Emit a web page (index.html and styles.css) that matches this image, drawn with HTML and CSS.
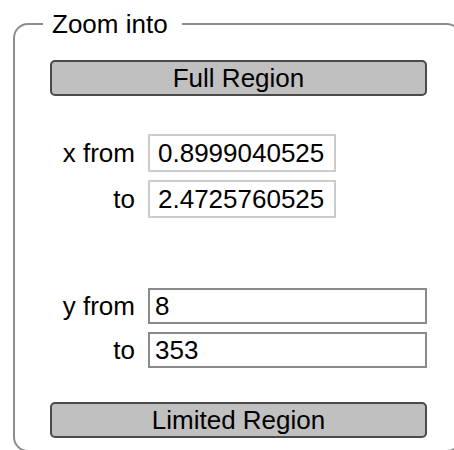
FILE: index.html
```html
<!DOCTYPE html>
<html lang="en">
<head>
<meta charset="utf-8">
<title>Zoom into</title>
<link rel="stylesheet" href="styles.css">
</head>
<body>
<fieldset class="zoom">
  <legend class="zoom-title">Zoom into</legend>
  <button type="button" class="region-btn">Full Region</button>
  <div class="range range-x">
    <label class="range-label" for="xfrom">x from</label>
    <input id="xfrom" class="range-input" type="text" value="0.8999040525">
    <label class="range-label" for="xto">to</label>
    <input id="xto" class="range-input" type="text" value="2.4725760525">
  </div>
  <div class="range range-y">
    <label class="range-label" for="yfrom">y from</label>
    <input id="yfrom" class="range-input" type="text" value="8">
    <label class="range-label" for="yto">to</label>
    <input id="yto" class="range-input" type="text" value="353">
  </div>
  <button type="button" class="region-btn region-btn-last">Limited Region</button>
</fieldset>
</body>
</html>
```

FILE: styles.css
```css
html, body {
  margin: 0;
  padding: 0;
  background: #ffffff;
  overflow: hidden;
}

body {
  font-family: "Liberation Sans", Arial, sans-serif;
  font-size: 26px;
  color: #000000;
}

.zoom {
  box-sizing: border-box;
  width: 449px;
  margin: 9px 0 0 13px;
  padding: 21px 33px 12px 35px;
  border: 2px solid #8c8c8c;
  border-radius: 15px;
  display: flex;
  flex-direction: column;
}

.zoom-title {
  margin-left: -7px;
  padding: 0 14px 0 9px;
  font-size: 26px;
  line-height: 30px;
}

.region-btn {
  box-sizing: border-box;
  width: 100%;
  height: 36px;
  margin: 0;
  padding: 0;
  border: 2px solid #4a4a4a;
  border-radius: 5px;
  background: #c0c0c0;
  color: #000000;
  font-family: inherit;
  font-size: 26px;
  line-height: 30px;
}

.region-btn-last {
  margin-top: 34px;
}

.range {
  display: grid;
  grid-template-columns: 85px auto;
  column-gap: 13px;
  row-gap: 8px;
  justify-content: start;
}

.range-x {
  margin-top: 38px;
}

.range-y {
  margin-top: 70px;
}

.range-label {
  text-align: right;
  align-self: center;
  line-height: 30px;
}

.range-input {
  box-sizing: border-box;
  margin: 0;
  font-family: inherit;
  font-size: 26px;
  color: #000000;
  background: #ffffff;
  outline: none;
}

.range-x .range-input {
  width: 188px;
  height: 38px;
  padding: 0 8px;
  border: 2px solid #cccccc;
}

.range-y .range-input {
  width: 279px;
  height: 36px;
  padding: 0 5px;
  border: 2px solid #8a8a8a;
}
```
